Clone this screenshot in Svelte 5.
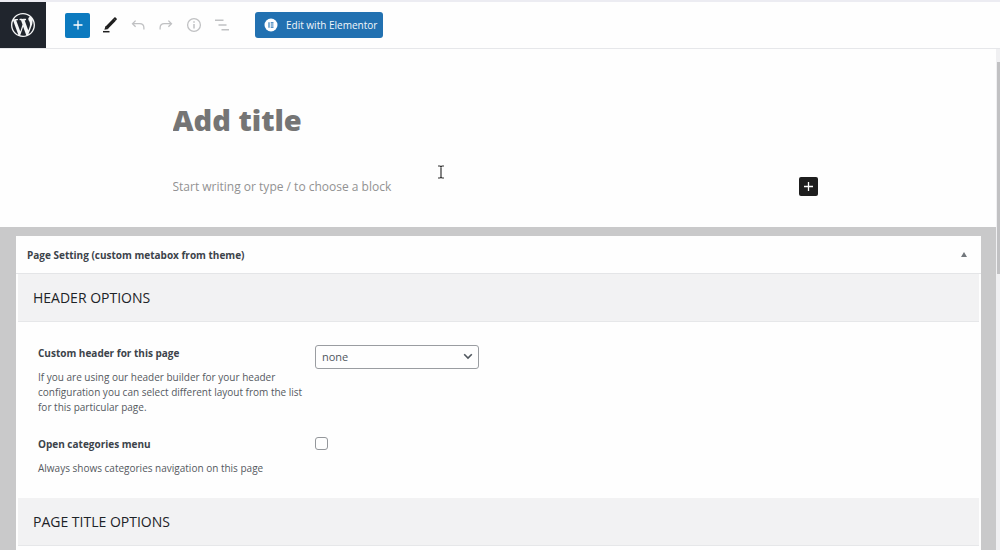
<script>
  let title = $state("");
  let content = $state("");
  let panelOpen = $state(true);
  let customHeader = $state("none");
  let openCategories = $state(false);
</script>

<div class="editor">
  <header class="topbar">
    <a class="home" href="#pages" aria-label="View Pages">
      <svg width="24" height="24" viewBox="0 0 20 20">
        <path fill="currentColor" d="M20 10c0-5.51-4.49-10-10-10C4.48 0 0 4.49 0 10c0 5.52 4.48 10 10 10 5.51 0 10-4.48 10-10zM7.78 15.37L4.37 6.22c.55-.02 1.17-.08 1.17-.08.5-.06.44-1.13-.06-1.11 0 0-1.45.11-2.37.11-.18 0-.37 0-.58-.01C4.12 2.69 6.87 1.11 10 1.11c2.33 0 4.45.87 6.05 2.34-.68-.11-1.65.39-1.65 1.58 0 .74.45 1.36.9 2.1.35.61.55 1.36.55 2.46 0 1.49-1.4 5-1.4 5l-3.03-8.37c.54-.02.82-.17.82-.17.5-.05.44-1.25-.06-1.22 0 0-1.44.12-2.38.12-.87 0-2.33-.12-2.33-.12-.5-.03-.56 1.2-.06 1.22l.92.08 1.26 3.41zM17.41 10c.24-.64.74-1.87.43-4.25.7 1.29 1.05 2.71 1.05 4.25 0 3.29-1.73 6.24-4.4 7.78.97-2.59 1.94-5.2 2.92-7.78zM6.1 18.09C3.12 16.65 1.11 13.53 1.11 10c0-1.3.23-2.48.72-3.59C3.25 10.3 4.67 14.2 6.1 18.09zm4.03-6.63l2.58 6.98c-.86.29-1.76.45-2.71.45-.79 0-1.57-.11-2.29-.33.81-2.38 1.62-4.74 2.42-7.1z" />
      </svg>
    </a>
    <div class="tools">
      <button class="add" aria-label="Add block">
        <svg width="18" height="18" viewBox="0 0 18 18"><path d="M9 4.5v9M4.5 9h9" stroke="currentColor" stroke-width="1.3" /></svg>
      </button>
      <button class="tool dark" aria-label="Tools">
        <svg width="18" height="18" viewBox="0 0 18 18">
          <path d="M5.8 11.6 13.6 3.6" stroke="currentColor" stroke-width="3.4" />
          <path d="M3.4 13.8 4.5 10l3 2.9zM12.3 2.4l1-.9a1 1 0 0 1 1.3 0l1 1a1 1 0 0 1 0 1.3l-.9 1z" fill="currentColor" />
          <path d="M2 15.7h6.5" stroke="currentColor" stroke-width="1.5" />
        </svg>
      </button>
      <button class="tool" aria-label="Undo">
        <svg width="18" height="18" viewBox="0 0 18 18"><path d="M6.6 4.6 3.5 7.7l3.1 3.1M3.5 7.7h7.2c2.8 0 4.2 1.4 4.2 4.2v1.6" fill="none" stroke="currentColor" stroke-width="1.3" /></svg>
      </button>
      <button class="tool" aria-label="Redo">
        <svg width="18" height="18" viewBox="0 0 18 18"><path d="m11.4 4.6 3.1 3.1-3.1 3.1M14.5 7.7H7.3c-2.8 0-4.2 1.4-4.2 4.2v1.6" fill="none" stroke="currentColor" stroke-width="1.3" /></svg>
      </button>
      <button class="tool" aria-label="Details">
        <svg width="18" height="18" viewBox="0 0 18 18">
          <circle cx="9" cy="9" r="6.4" fill="none" stroke="currentColor" stroke-width="1.3" />
          <path d="M9 5.2v1.5M9 8v4.6" stroke="currentColor" stroke-width="1.5" />
        </svg>
      </button>
      <button class="tool" aria-label="List view">
        <svg width="18" height="18" viewBox="0 0 18 18"><path d="M2 4.3h8.5M5.5 9h8M8.5 13.7H16" stroke="currentColor" stroke-width="1.4" /></svg>
      </button>
    </div>
    <button class="elementor">
      <svg width="14" height="14" viewBox="0 0 14 14">
        <circle cx="7" cy="7" r="6.5" fill="#fff" />
        <path d="M5 4.3v5.4M6.7 4.9h2.8M6.7 7h2.8M6.7 9.1h2.8" stroke="#2271b1" stroke-width="1.1" />
      </svg>
      Edit with Elementor
    </button>
  </header>

  <div class="body">
    <main>
      <div class="canvas">
        <div class="post">
          <input class="title" type="text" placeholder="Add title" aria-label="Add title" bind:value={title} />
          <div class="block">
            <input
              class="paragraph"
              type="text"
              placeholder="Start writing or type / to choose a block"
              aria-label="Empty block"
              bind:value={content}
            />
            <button class="inserter" aria-label="Add block">
              <svg width="19" height="19" viewBox="0 0 19 19"><path d="M9.5 5v9M5 9.5h9" stroke="currentColor" stroke-width="1.3" /></svg>
            </button>
          </div>
          <svg class="cursor" width="8" height="14" viewBox="0 0 8 14">
            <path d="M1 1h2l1 .8L5 1h2M1 13h2l1-.8 1 .8h2M4 1.5v11" fill="none" stroke="#333" stroke-width="1.2" />
          </svg>
        </div>
      </div>

      <div class="metaboxes">
        <section class="panel">
          <div class="panel-head">
            <h2>Page Setting (custom metabox from theme)</h2>
            <button class="toggle" aria-label="Toggle panel" aria-expanded={panelOpen} onclick={() => (panelOpen = !panelOpen)}>
              <svg width="6" height="5" viewBox="0 0 6 5"><path d="M3 0l3 5H0z" fill="currentColor" /></svg>
            </button>
          </div>
          {#if panelOpen}
            <h3>HEADER OPTIONS</h3>
            <div class="fields">
              <div class="field">
                <div class="info">
                  <label for="custom-header">Custom header for this page</label>
                  <p>
                    If you are using our header builder for your header configuration you can select different layout
                    from the list for this particular page.
                  </p>
                </div>
                <div class="control">
                  <select id="custom-header" bind:value={customHeader}>
                    <option value="none">none</option>
                  </select>
                  <svg class="chevron" width="10" height="7" viewBox="0 0 10 7">
                    <path d="m1.2 1.2 3.8 3.8 3.8-3.8" fill="none" stroke="#50575e" stroke-width="1.6" />
                  </svg>
                </div>
              </div>
              <div class="field">
                <div class="info">
                  <label for="open-categories">Open categories menu</label>
                  <p>Always shows categories navigation on this page</p>
                </div>
                <div class="control">
                  <input id="open-categories" type="checkbox" bind:checked={openCategories} />
                </div>
              </div>
            </div>
            <h3>PAGE TITLE OPTIONS</h3>
            <div class="fields"></div>
          {/if}
        </section>
      </div>
    </main>
    <div class="scrollbar"><div class="thumb"></div></div>
  </div>
</div>

<style>
  :global(body) {
    margin: 0;
    background: #fefefe;
  }
  .editor {
    display: flex;
    flex-direction: column;
    height: 100vh;
    overflow: hidden;
    box-sizing: border-box;
    border-top: 2px solid #ececf2;
    font-family: "Open Sans", "Noto Sans", sans-serif;
    color: #3c434a;
  }
  button,
  input,
  select {
    font-family: inherit;
    padding: 0;
    margin: 0;
    border: 0;
    background: none;
  }
  button {
    display: flex;
    align-items: center;
    justify-content: center;
    cursor: pointer;
  }
  svg { display: block; }

  .topbar {
    display: flex;
    align-items: center;
    flex: none;
    height: 46px;
    background: #fefefe;
    border-bottom: 1px solid #e6e7ea;
  }
  .home {
    display: flex;
    align-items: center;
    justify-content: center;
    width: 46px;
    height: 46px;
    margin-right: 19px;
    background: #20252d;
    color: #f4f5f6;
  }
  .tools {
    display: flex;
    align-items: center;
    gap: 10px;
  }
  .add {
    width: 25px;
    height: 25px;
    margin-right: 1px;
    border-radius: 2px;
    background: #0c7abf;
    color: #fff;
  }
  .tool {
    width: 18px;
    height: 25px;
    color: #c0c1c3;
  }
  .tool.dark { color: #1e1e1e; }
  .elementor {
    gap: 8px;
    height: 26px;
    margin-left: 24px;
    padding: 0 6px 0 9px;
    border-radius: 3px;
    background: #2271b1;
    color: #f2f7fb;
    font-size: 10px;
  }

  .body {
    display: flex;
    flex: 1;
    min-height: 0;
  }
  main {
    flex: 1;
    min-width: 0;
    overflow: hidden;
  }
  .canvas {
    padding: 48px 30px 30px 24px;
    background: #fefefe;
  }
  .post {
    position: relative;
    max-width: 645px;
    margin: 0 auto;
  }
  .title {
    display: block;
    width: 100%;
    height: 44px;
    font-size: 29px;
    font-weight: 800;
    outline: none;
  }
  .title::placeholder {
    color: #757575;
    opacity: 1;
  }
  .block {
    display: flex;
    align-items: center;
    margin-top: 35px;
    margin-bottom: 1px;
  }
  .paragraph {
    flex: 1;
    height: 20px;
    font-size: 12px;
    outline: none;
  }
  .paragraph::placeholder {
    color: #929292;
    opacity: 1;
  }
  .inserter {
    width: 19px;
    height: 19px;
    border-radius: 2px;
    background: #1e1e1e;
    color: #fff;
  }
  /* text caret pointer floating over the canvas */
  .cursor {
    position: absolute;
    left: 264px;
    top: 68px;
  }

  .metaboxes {
    padding: 9px 15px 0 16px;
    background: #c9c9ca;
  }
  .panel { background: #fefefe; }
  .panel-head {
    display: flex;
    align-items: center;
    justify-content: space-between;
    height: 37px;
    padding: 0 14px 0 11px;
    border-bottom: 1px solid #e4e5e7;
  }
  h2,
  h3,
  p { margin: 0; }
  h2 {
    font-size: 10px;
    font-weight: 700;
  }
  .toggle {
    width: 6px;
    height: 20px;
    color: #72777c;
  }
  h3 {
    height: 47px;
    margin: 0 2px;
    padding-left: 15px;
    border-bottom: 1px solid #e6e7e9;
    background: #f2f2f3;
    color: #1d2327;
    font-size: 14px;
    font-weight: 400;
    line-height: 48px;
  }
  .fields {
    display: flex;
    flex-direction: column;
    gap: 20px;
    padding: 22px;
  }
  .field {
    display: grid;
    grid-template-columns: 272px 1fr;
    gap: 5px;
  }
  label {
    display: block;
    font-size: 10px;
    font-weight: 700;
    line-height: 18px;
  }
  p {
    margin-top: 8px;
    color: #55595e;
    font-size: 10px;
    line-height: 15px;
  }
  .control {
    position: relative;
    justify-self: start;
  }
  select {
    appearance: none;
    width: 164px;
    height: 24px;
    padding: 0 24px 0 6px;
    border: 1px solid #9a9da1;
    border-radius: 3px;
    background: #fefefe;
    color: #50575e;
    font-size: 11px;
  }
  .chevron {
    position: absolute;
    right: 6px;
    top: 9px;
    pointer-events: none;
  }
  input[type="checkbox"] {
    appearance: none;
    display: block;
    box-sizing: border-box;
    width: 13px;
    height: 13px;
    margin-top: 2px;
    border: 1px solid #94979b;
    border-radius: 3px;
    background: #fefefe;
  }
  input[type="checkbox"]:checked { background: #2271b1; }

  .scrollbar {
    width: 4px;
    padding-top: 13px;
    background: #f0f0f2;
  }
  .thumb {
    height: 212px;
    margin-left: 1px;
    background: #c1c1c3;
  }
</style>
